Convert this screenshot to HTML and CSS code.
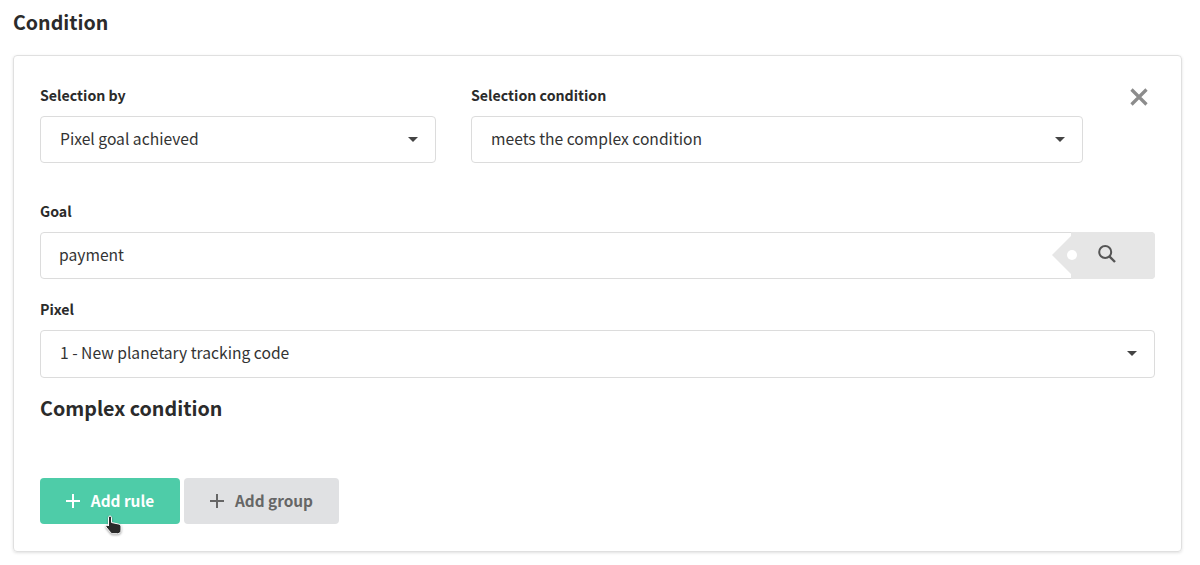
FILE: index.html
```html
<!DOCTYPE html>
<html lang="en">
<head>
<meta charset="utf-8">
<title>Condition</title>
<link rel="stylesheet" href="styles.css">
</head>
<body>
<h2 class="page-title">Condition</h2>
<section class="card">
  <div class="top-row">
    <div class="field field-by">
      <label class="label">Selection by</label>
      <div class="select"><span>Pixel goal achieved</span><i class="caret"></i></div>
    </div>
    <div class="field field-cond">
      <label class="label">Selection condition</label>
      <div class="select"><span>meets the complex condition</span><i class="caret"></i></div>
    </div>
    <button class="close" aria-label="Close">
      <svg width="18" height="18" viewBox="0 0 18 18"><path d="M1.500 1.500L16.500 16.500M16.500 1.500L1.500 16.500" stroke="#8c8c8c" stroke-width="3.200" fill="none"/></svg>
    </button>
  </div>
  <div class="field field-goal">
    <label class="label">Goal</label>
    <div class="search">
      <span class="search-value">payment</span>
      <div class="tag">
        <i class="tag-hole"></i>
        <svg class="tag-icon" width="20" height="20" viewBox="0 0 20 20"><circle cx="8.200" cy="8" r="6" stroke="#555" stroke-width="2" fill="none"/><path d="M12.400 12.400L18 18" stroke="#555" stroke-width="2.400" fill="none"/></svg>
      </div>
    </div>
  </div>
  <div class="field field-pixel">
    <label class="label">Pixel</label>
    <div class="select"><span>1 - New planetary tracking code</span><i class="caret"></i></div>
  </div>
  <h3 class="sub-title">Complex condition</h3>
  <div class="actions">
    <button class="btn btn-primary">
      <svg class="btn-icon" width="14" height="14" viewBox="0 0 14 14"><path d="M7 0V14M0 7H14" stroke="#fff" stroke-width="2" fill="none"/></svg>
      <span>Add rule</span>
      <svg class="cursor" width="20" height="22" viewBox="0 0 20 22"><path d="M3.500 2.200c0-1.500 3-1.500 3 0V7.500l7 1.500c1.500.4 2.500 1.200 2.500 2.800v3.200c0 2.500-1.500 3.700-3.500 3.700H8c-1.300 0-2-.5-2.700-1.500L1 12c-.8-1.300.8-2.500 2-1.500l.5.5z" fill="#2a2a2a" stroke="#fff" stroke-width="1"/></svg>
    </button>
    <button class="btn btn-secondary">
      <svg class="btn-icon" width="14" height="14" viewBox="0 0 14 14"><path d="M7 0V14M0 7H14" stroke="#666" stroke-width="2" fill="none"/></svg>
      <span>Add group</span>
    </button>
  </div>
</section>
</body>
</html>
```
FILE: styles.css
```css
* { box-sizing: border-box; }
html, body { margin: 0; padding: 0; background: #fff; }
body {
  width: 1200px;
  height: 565px;
  overflow: hidden;
  padding: 0 18px 0 13px;
  font-family: "Noto Sans CJK SC", "Noto Sans", sans-serif;
  color: #2b2b2b;
}
.page-title {
  margin: 0;
  height: 55px;
  padding-top: 8px;
  font-size: 19.600px;
  line-height: 28px;
  font-weight: 600;
}
.card {
  position: relative;
  height: 497px;
  padding: 27px 26px 0 26px;
  border: 1px solid #e0e0e0;
  border-radius: 4px;
  box-shadow: 0 1px 3px rgba(0,0,0,.12);
}
.top-row { display: flex; align-items: flex-start; }
.field-by { width: 396px; margin-right: 35px; }
.field-cond { width: 612px; }
.close {
  margin: 5px 0 0 47px;
  padding: 0;
  border: 0;
  background: none;
  width: 18px;
  height: 18px;
  display: block;
}
.close svg { display: block; }
.label {
  display: block;
  height: 33px;
  font-size: 14.200px;
  line-height: 24px;
  font-weight: 600;
  color: #2b2b2b;
}
.select, .search {
  position: relative;
  display: flex;
  align-items: center;
  height: 47px;
  border: 1px solid #dcdcdc;
  border-radius: 4px;
  padding-left: 19px;
  padding-bottom: 2px;
  font-size: 15.650px;
  line-height: 24px;
  color: #333;
}
.caret {
  position: absolute;
  right: 17px;
  top: 20px;
  width: 0;
  height: 0;
  border-left: 5px solid transparent;
  border-right: 5px solid transparent;
  border-top: 5px solid #444;
}
.field-goal { margin-top: 36px; }
.search { padding-left: 18px; }
.field-pixel { margin-top: 18px; }
.field-pixel .select { height: 48px; }
.tag {
  position: absolute;
  right: -1px;
  top: -1px;
  bottom: -1px;
  width: 84px;
  background: #e6e6e6;
  border-radius: 0 4px 4px 0;
}
.tag::before {
  content: "";
  position: absolute;
  left: -19px;
  top: 4px;
  border-top: 19px solid transparent;
  border-bottom: 19px solid transparent;
  border-right: 19px solid #e6e6e6;
}
.tag-hole {
  position: absolute;
  left: -4px;
  top: 18px;
  width: 10px;
  height: 10px;
  border-radius: 50%;
  background: #fff;
}
.tag-icon { position: absolute; left: 26px; top: 12px; }
.sub-title {
  margin: 16px 0 0;
  height: 73px;
  font-size: 19.700px;
  line-height: 28px;
  font-weight: 600;
}
.actions { display: flex; gap: 4px; margin-top: 11px; }
.btn {
  position: relative;
  display: flex;
  align-items: center;
  justify-content: center;
  gap: 11px;
  height: 46px;
  padding: 0 0 2px;
  border: 0;
  border-radius: 4px;
  font: 600 15.350px/24px "Noto Sans CJK SC", "Noto Sans", sans-serif;
}
.btn-icon { margin-top: 2px; }
.btn-primary { width: 140px; background: #4ecca8; color: #fff; }
.btn-secondary { width: 155px; background: #e0e1e3; color: #666; }
.cursor { position: absolute; left: 65px; top: 37px; filter: drop-shadow(0 1px 1px rgba(0,0,0,.35)); }
```
